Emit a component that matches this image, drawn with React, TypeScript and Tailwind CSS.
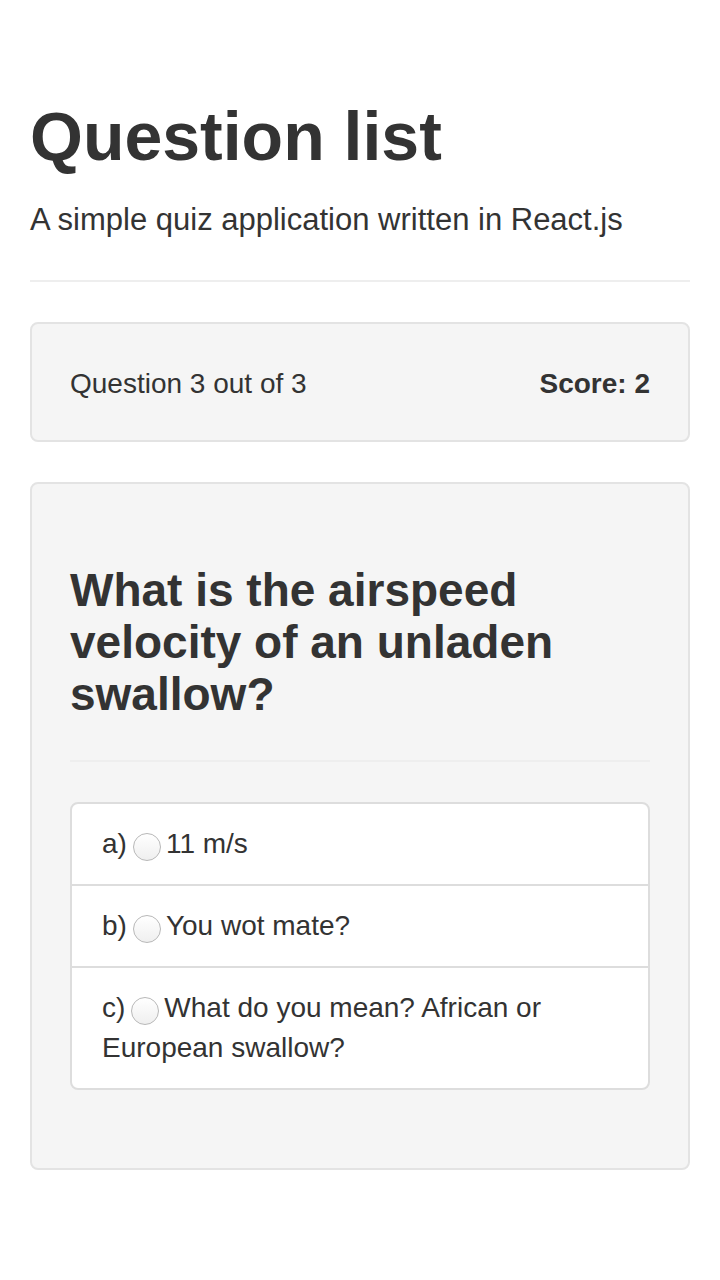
const answers = [
  { key: "a)", text: "11 m/s" },
  { key: "b)", text: "You wot mate?" },
  { key: "c)", text: "What do you mean? African or European swallow?" },
]

function Radio() {
  return (
    <span className="inline-block w-[28px] h-[28px] rounded-full border-[1.5px] border-[#b8b8b8] bg-gradient-to-b from-white to-[#efefef] align-[-8px] ml-[6px] mr-[5px]" />
  )
}

export default function App() {
  return (
    <div className="min-h-[1280px] bg-white text-[#333] px-[30px] font-['Liberation_Sans',Arial,sans-serif]">
      {/* header */}
      <div className="pt-[99px] pb-[38px] border-b-2 border-[#eee]">
        <h1 className="text-[68px] leading-[75px] font-bold">Question list</h1>
        <p className="mt-[23px] text-[31px] leading-[45px]">
          A simple quiz application written in React.js
        </p>
      </div>

      {/* progress well */}
      <div className="mt-[40px] bg-[#f5f5f5] border-2 border-[#e3e3e3] rounded-[8px] pt-[40px] pb-[36px] px-[38px] flex justify-between text-[28px] leading-[40px]">
        <span>Question 3 out of 3</span>
        <span className="font-bold">Score: 2</span>
      </div>

      {/* question well */}
      <div className="mt-[40px] bg-[#f5f5f5] border-2 border-[#e3e3e3] rounded-[8px] p-[38px]">
        <h3 className="mt-[42px] text-[46px] leading-[52px] font-bold">
          What is the airspeed velocity of an unladen swallow?
        </h3>
        <hr className="mt-[40px] mb-[40px] border-t-2 border-[#eee]" />
        <ul className="mb-[40px] bg-white border-2 border-[#ddd] rounded-[8px] text-[28px] leading-[40px]">
          {answers.map((a, i) => (
            <li
              key={a.key}
              className={i > 0 ? "px-[30px] py-[20px] border-t-2 border-[#ddd]" : "px-[30px] py-[20px]"}
            >
              {a.key}
              <Radio />
              {a.text}
            </li>
          ))}
        </ul>
      </div>
    </div>
  )
}
